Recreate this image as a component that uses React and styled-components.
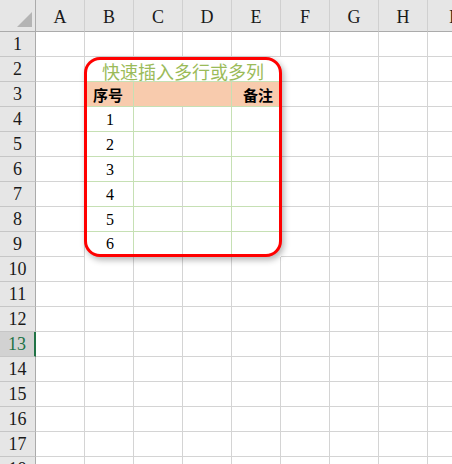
import React from 'react'
import styled, { createGlobalStyle } from 'styled-components'

const GlobalStyle = createGlobalStyle`
  html, body {
    margin: 0;
    padding: 0;
    background: #ffffff;
    overflow: hidden;
  }
`

const COLS = ['A', 'B', 'C', 'D', 'E', 'F', 'G', 'H', 'I']
const ROW_COUNT = 18
const SELECTED_ROW = 13

const Viewport = styled.div`
  width: 452px;
  height: 464px;
  overflow: hidden;
  background: #ffffff;
`

const Sheet = styled.div`
  display: grid;
  grid-template-columns: 36px repeat(9, 49px);
  grid-template-rows: 32px repeat(${ROW_COUNT}, 25px);
  font-family: 'Liberation Serif', 'DejaVu Serif', serif;
`

const Corner = styled.div`
  background: #e6e6e6;
  border-right: 1px solid #ababab;
  border-bottom: 1px solid #ababab;
  box-sizing: border-box;
  display: flex;
  align-items: flex-end;
  justify-content: flex-end;
  padding: 0 3px 4px 0;
`

const ColHead = styled.div`
  background: #e6e6e6;
  border-right: 1px solid #d0d0d0;
  border-bottom: 1px solid #ababab;
  box-sizing: border-box;
  display: flex;
  align-items: flex-end;
  justify-content: center;
  padding-bottom: 3px;
  font-size: 18px;
  color: #1a1a1a;
`

const RowHead = styled.div`
  background: ${p => (p.$active ? '#d2d2d2' : '#e6e6e6')};
  color: ${p => (p.$active ? '#217346' : '#1a1a1a')};
  border-bottom: 1px solid #c6c6c6;
  border-right: ${p => (p.$active ? '2px solid #217346' : '1px solid #ababab')};
  box-sizing: border-box;
  display: flex;
  align-items: center;
  justify-content: center;
  font-size: 18px;
  padding-top: 1px;
`

const Cell = styled.div`
  border-right: 1px solid #d4d4d4;
  border-bottom: 1px solid #d4d4d4;
  box-sizing: border-box;
  background: #ffffff;
`

const Table = styled.div`
  grid-column: 3 / 7;
  grid-row: 3 / 11;
  margin: 0 -1px 0 -1px;
  border: 3px solid #ff0000;
  border-radius: 16px;
  background: #ffffff;
  box-shadow: 2px 3px 6px rgba(0, 0, 0, 0.3);
  overflow: hidden;
  display: grid;
  grid-template-columns: 47px 49px 49px 47px;
  grid-template-rows: 22px repeat(6, 25px) 22px;
  position: relative;
  z-index: 1;
`

const Title = styled.div`
  grid-column: 1 / -1;
  border-bottom: 1px solid #c6e0b4;
  display: flex;
  align-items: center;
  justify-content: center;
  font-family: 'Noto Sans CJK SC', sans-serif;
  font-size: 18px;
  color: #9bbb59;
  padding-top: 1px;
`

const HeadCell = styled.div`
  grid-column: ${p => p.$span || 'auto'};
  background: #f8cbad;
  border-right: ${p => (p.$last ? 'none' : '1px solid #c6e0b4')};
  border-bottom: 1px solid #c6e0b4;
  display: flex;
  align-items: center;
  justify-content: ${p => p.$align || 'flex-start'};
  padding: 0 6px;
  font-family: 'Noto Sans CJK SC', sans-serif;
  font-weight: 700;
  font-size: 15px;
  color: #000000;
`

const DataCell = styled.div`
  border-right: ${p => p.$line ? `1px solid ${p.$line}` : 'none'};
  border-bottom: ${p => (p.$bottom ? '1px solid #c6e0b4' : 'none')};
  display: flex;
  align-items: center;
  justify-content: center;
  padding-top: 2px;
  font-family: 'Liberation Serif', 'DejaVu Serif', serif;
  font-size: 16px;
  color: #000000;
`

function CornerMark() {
  return (
    <svg width="15" height="15" viewBox="0 0 15 15">
      <polygon points="15,0 15,15 0,15" fill="#b4b4b4" />
    </svg>
  )
}

function InsertTable() {
  const nums = [1, 2, 3, 4, 5, 6]
  return (
    <Table>
      <Title>快速插入多行或多列</Title>
      <HeadCell>序号</HeadCell>
      <HeadCell $span="span 2" />
      <HeadCell $align="flex-end" $last>备注</HeadCell>
      {nums.map(n => {
        const bottom = n !== nums.length
        return (
          <React.Fragment key={n}>
            <DataCell $line="#c6e0b4" $bottom={bottom}>{n}</DataCell>
            <DataCell $line="#d4d4d4" $bottom={bottom} />
            <DataCell $line="#c6e0b4" $bottom={bottom} />
            <DataCell $bottom={bottom} />
          </React.Fragment>
        )
      })}
    </Table>
  )
}

// cells covered by the table block (B2:E9)
const inTable = (row, col) => row >= 2 && row <= 9 && col >= 1 && col <= 4

export default function App() {
  const rows = Array.from({ length: ROW_COUNT }, (_, i) => i + 1)
  return (
    <Viewport>
      <GlobalStyle />
      <Sheet>
        <Corner><CornerMark /></Corner>
        {COLS.map(c => <ColHead key={c}>{c}</ColHead>)}
        <InsertTable />
        {rows.map(r => (
          <React.Fragment key={r}>
            <RowHead $active={r === SELECTED_ROW}>{r}</RowHead>
            {COLS.map((c, ci) => inTable(r, ci) ? null : <Cell key={c} />)}
          </React.Fragment>
        ))}
      </Sheet>
    </Viewport>
  )
}
